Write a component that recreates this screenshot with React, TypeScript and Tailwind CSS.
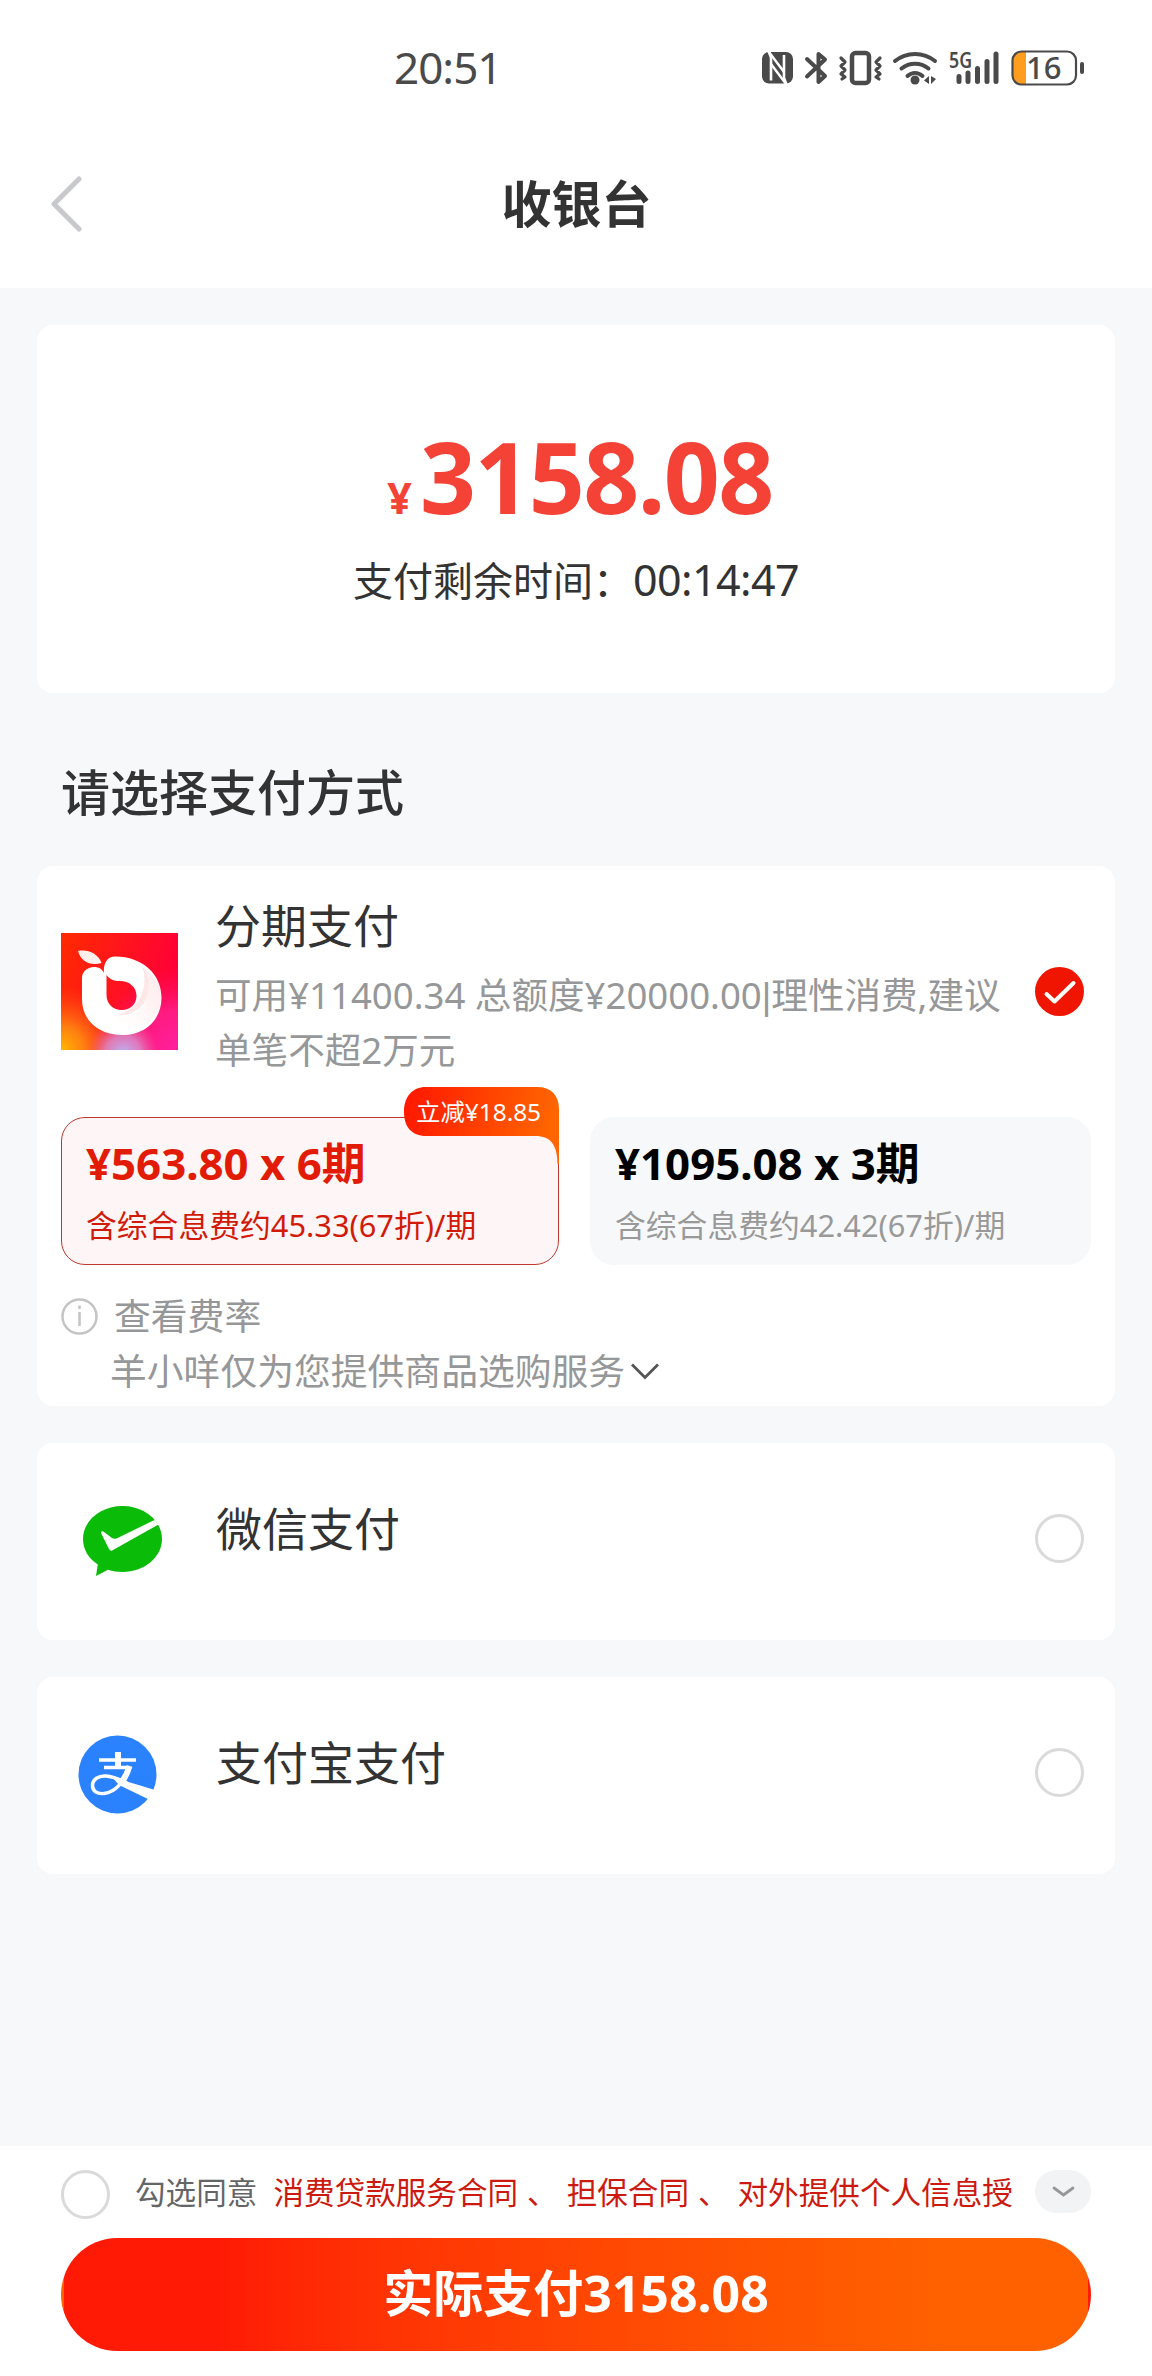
import clsx from "clsx";
import React, { useState } from "react";

type Plan = {
	id: string;
	title: string;
	fee: string;
	discount?: string;
};

const plans: Plan[] = [
	{
		id: "6",
		title: "¥563.80 x 6期",
		fee: "含综合息费约45.33(67折)/期",
		discount: "立减¥18.85",
	},
	{ id: "3", title: "¥1095.08 x 3期", fee: "含综合息费约42.42(67折)/期" },
];

function StatusBar() {
	return (
		<div className="h-[134px] pl-[394px] pr-[66px] flex items-center justify-between text-[#4a4a4a]">
			<span className="text-[44px] leading-[60px] tracking-[-1px]">20:51</span>
			<svg width="324" height="56" viewBox="0 -11 324 56" fill="none">
				{/* nfc */}
				<rect y="2" width="31" height="31.500" rx="7" fill="currentColor" />
				<path
					d="M6.500 1L9 7.500v23M24.500 34.500L22 28V5"
					stroke="#fff"
					strokeWidth="2.600"
				/>
				<path
					d="M7 2l15 20M9 14l15 20"
					stroke="#fff"
					strokeWidth="2.400"
				/>
				{/* bluetooth */}
				<path
					d="M45 9l18 17-6.500 6V4L63 9.500 45 26.500"
					stroke="currentColor"
					strokeWidth="4"
					strokeLinecap="round"
					strokeLinejoin="round"
				/>
				{/* vibrate */}
				<rect
					x="90"
					y="3"
					width="17"
					height="30"
					rx="3.500"
					stroke="currentColor"
					strokeWidth="4.500"
				/>
				<path
					d="M79 8l4 4-4 4 4 4-4 4 4 3-3 2M118 8l-4 4 4 4-4 4 4 4-4 3 3 2"
					stroke="currentColor"
					strokeWidth="3.200"
					strokeLinecap="round"
					strokeLinejoin="round"
				/>
				{/* wifi */}
				<path
					d="M133 11c11.500-9.500 28.500-9.500 40 0M139.500 18.500c8-6.500 19-6.500 27 0M145.500 26c4.500-4 10.500-4 15 0"
					stroke="currentColor"
					strokeWidth="4"
					strokeLinecap="round"
				/>
				<circle cx="153" cy="30" r="4.500" fill="currentColor" />
				<path d="M167 26v8l-5-3.500zM169 26l5 3-5 5z" fill="currentColor" />
				{/* signal */}
				<text
					x="187"
					y="17.500"
					fill="currentColor"
					fontSize="21"
					fontWeight="600"
					textLength="23"
					lengthAdjust="spacingAndGlyphs"
				>
					5G
				</text>
				<path
					d="M197 26.500v5M206 23v8.500M215.500 18.500v13M225 11.500v20M234 4v27.500"
					stroke="currentColor"
					strokeWidth="5"
					strokeLinecap="round"
				/>
				{/* battery */}
				<path d="M258 2h6v32h-6c-4 0-7-3-7-7V9c0-4 3-7 7-7z" fill="#ff9d1e" />
				<rect
					x="250.500"
					y="1.500"
					width="63.500"
					height="33"
					rx="9"
					stroke="currentColor"
					strokeWidth="2.200"
				/>
				<rect x="318" y="12" width="4" height="12" rx="2" fill="currentColor" />
				<text
					x="264"
					y="29"
					fill="currentColor"
					fontSize="31"
					fontWeight="500"
				>
					16
				</text>
			</svg>
		</div>
	);
}

function InstallmentLogo() {
	return (
		<svg width="117" height="117" viewBox="0 0 117 117" className="shrink-0">
			<defs>
				<linearGradient id="logoBase" x1="0" y1="0" x2="1" y2="0.300">
					<stop offset="0" stopColor="#ff2a00" />
					<stop offset="1" stopColor="#ff0038" />
				</linearGradient>
				<radialGradient id="logoYellow" cx="0" cy="1" r="0.550">
					<stop offset="0" stopColor="#ffb800" />
					<stop offset="0.350" stopColor="#ff9410" stopOpacity="0.850" />
					<stop offset="1" stopColor="#ff5a10" stopOpacity="0" />
				</radialGradient>
				<radialGradient id="logoPink" cx="1" cy="1" r="0.700">
					<stop offset="0" stopColor="#ff1fa0" />
					<stop offset="0.500" stopColor="#ff1f8c" stopOpacity="0.850" />
					<stop offset="1" stopColor="#ff1060" stopOpacity="0" />
				</radialGradient>
				<radialGradient id="logoBlue" cx="0.530" cy="1.030" r="0.300">
					<stop offset="0" stopColor="#b9b4f5" />
					<stop offset="0.500" stopColor="#d890d0" stopOpacity="0.800" />
					<stop offset="1" stopColor="#e860a0" stopOpacity="0" />
				</radialGradient>
				<linearGradient id="logoFold" x1="0.900" y1="0.300" x2="0.300" y2="0.700">
					<stop offset="0" stopColor="#ffc4c8" />
					<stop offset="1" stopColor="#fff6f6" />
				</linearGradient>
			</defs>
			<rect width="117" height="117" fill="url(#logoBase)" />
			<rect width="117" height="117" fill="url(#logoYellow)" />
			<rect width="117" height="117" fill="url(#logoPink)" />
			<rect width="117" height="117" fill="url(#logoBlue)" />
			<path d="M17 18c9-2 20 2 23.500 12C30 33 20 29 17 18z" fill="#fff0ee" />
			<path
				fillRule="evenodd"
				fill="#fff"
				d="M21 45c0-6 5-11 12-11 5 0 8 2 10 6-1-9 3-16.500 11-16.500 28 0 46.500 18 46.500 41C100.500 87 84 102 62 102 38 102 21 88 21 66zM45.500 42v20c0 9 7 15 15 15 9 0 15-6 15-14 0-9-7-15-17-15-6 0-10-2-13-6z"
			/>
			<path
				d="M79 33c13 14 11 35-4 47-5 4-14 6-21 2 6 9 14 13 25 13 12-5 21-16 21-30.500C100 51 92 39 79 33z"
				fill="url(#logoFold)"
				opacity="0.300"
			/>
			<path
				d="M82 35c6 22-6 44-28 47 16 2 30-7 33-22 2-9 0-18-5-25z"
				fill="#ffb9bd"
				opacity="0.350"
			/>
		</svg>
	);
}

function WechatPayIcon() {
	return (
		<svg width="79" height="70" viewBox="0 0 79 70">
			<path
				d="M39.500 0C61 0 79 14.500 79 33S61 66 39.500 66c-5 0-10-.7-14.500-2.200L13 70l1.800-11.500C5.500 52.500 0 43.500 0 33 0 14.500 18 0 39.500 0z"
				fill="#0abb07"
			/>
			<path
				d="M18 27c0-2 1.500-2 3-1l8 6c1.500 1 3 1 5 .2L71.500 14l4 4.500L30 44c-1.500 1-3 1-4-1z"
				fill="#fff"
			/>
		</svg>
	);
}

function AlipayIcon() {
	return (
		<svg width="79" height="79" viewBox="0 0 79 79" fill="none" stroke="#fff">
			<circle cx="39.500" cy="39.500" r="39" fill="#2a82ff" stroke="none" />
			<path d="M21 25h37M26 32.500h25" strokeWidth="3.500" />
			<path d="M40 17v15" strokeWidth="6" />
			<path
				d="M51 31.500C47 46 38 57 26 58.500 19 59.300 14.500 56 14.500 50.500c0-6 6-10 13.500-9.500 7 .5 14 3.500 21 7"
				strokeWidth="3.500"
			/>
			<path d="M51.500 31c-2 7-4.500 12-8.500 17" strokeWidth="6" />
			<path d="M34 42l43 13-5 10-31-15z" fill="#fff" stroke="none" />
		</svg>
	);
}

function Radio({ checked = false }: { checked?: boolean }) {
	if (checked) {
		return (
			<svg width="49" height="49" viewBox="0 0 49 49" className="shrink-0">
				<circle cx="24.500" cy="24.500" r="24.500" fill="#f01500" />
				<path
					d="M11.500 27l8 7.500L38.500 16"
					stroke="#fff"
					strokeWidth="4"
					strokeLinecap="round"
					strokeLinejoin="round"
					fill="none"
				/>
			</svg>
		);
	}
	return (
		<span className="block size-[49px] shrink-0 rounded-full border-3 border-[#dadada] bg-white" />
	);
}

function PlanCard({
	plan,
	active,
	onSelect,
}: {
	plan: Plan;
	active: boolean;
	onSelect: () => void;
}) {
	return (
		<button
			type="button"
			onClick={onSelect}
			className={clsx(
				"relative h-[148px] rounded-3xl border pl-6 flex flex-col text-left whitespace-nowrap",
				active
					? "w-[498px] border-[#c0392f] bg-[#fef5f6] text-[#d11a08]"
					: "w-[501px] border-[#f7f8fa] bg-[#f7f8fa] text-black",
			)}
		>
			<span
				className={clsx(
					"mt-[18px] text-[43.800px] leading-[54px] font-bold",
					active && "text-[#e11b05]",
				)}
			>
				{plan.title}
			</span>
			<span
				className={clsx(
					"mt-[9px] text-[30.800px] leading-[52px]",
					!active && "text-[#999999]",
				)}
			>
				{plan.fee}
			</span>
			{plan.discount && (
				<span className="absolute -right-px -top-[31px] w-[155px] h-[77px]">
					<svg
						width="155"
						height="77"
						viewBox="0 0 155 77"
						className="absolute inset-0"
					>
						<defs>
							<linearGradient id="badge" x1="0" y1="0" x2="1" y2="0.100">
								<stop offset="0.050" stopColor="#ff1a00" />
								<stop offset="1" stopColor="#ff6600" />
							</linearGradient>
						</defs>
						<path
							d="M22 0h111c14 0 22 8 22 22v55h-1.500c0-18-6-28-22.500-28H22C8 49 0 40 0 25S8 0 22 0z"
							fill="url(#badge)"
						/>
					</svg>
					<span className="relative block pl-3 text-[24.400px] leading-[49px] text-white">
						{plan.discount}
					</span>
				</span>
			)}
		</button>
	);
}

function PayMethod({
	icon,
	name,
	iconClass,
}: {
	icon: React.ReactNode;
	name: string;
	iconClass: string;
}) {
	return (
		<li className="mt-[37px] h-[197px] rounded-2xl bg-white pr-[31px] flex">
			<span className={clsx("w-[179px] shrink-0", iconClass)}>{icon}</span>
			<h4 className="mt-14 flex-1 text-[46px] leading-[58px]">{name}</h4>
			<span className="mt-[71px]">
				<Radio />
			</span>
		</li>
	);
}

export default function App() {
	const [plan, setPlan] = useState("6");

	return (
		<div className="w-[1152px] h-[2376px] overflow-hidden flex flex-col bg-[#f7f8fa] text-[#333333] font-['Noto_Sans','Noto_Sans_CJK_SC',sans-serif]">
			<header className="h-[288px] shrink-0 bg-white">
				<StatusBar />
				<div className="h-[140px] px-[50px] flex items-center">
					<svg
						width="32"
						height="56"
						viewBox="0 0 32 56"
						fill="none"
						stroke="#c8c9cc"
						strokeWidth="5"
						strokeLinecap="round"
						strokeLinejoin="round"
					>
						<path d="M29 3L4 28l25 25" />
					</svg>
					<h1 className="flex-1 pr-[31px] text-center text-[50px] leading-[60px] font-bold">
						收银台
					</h1>
				</div>
			</header>

			<main className="flex-1 px-[37px] pt-[37px]">
				<section className="h-[368px] rounded-2xl bg-white flex flex-col items-center">
					<p className="mt-24 pl-2 h-28 flex items-baseline font-bold text-[#f44336]">
						<span className="mr-2 text-[43px] leading-none">¥</span>
						<span className="text-[98px] leading-[110px] tracking-[-1.600px]">
							3158.08
						</span>
					</p>
					<p className="mt-[18px] text-[40px] leading-[60px] flex items-baseline">
						支付剩余时间：
						<span className="text-[43px] leading-none tracking-[-0.600px]">
							00:14:47
						</span>
					</p>
				</section>

				<h2 className="mt-[68px] ml-6 text-[49px] leading-[62px] font-medium">
					请选择支付方式
				</h2>

				<ul>
					<li className="mt-[43px] h-[540px] rounded-2xl bg-white px-6">
						<div className="pt-[29px] flex">
							<span className="mt-[38px]">
								<InstallmentLogo />
							</span>
							<div className="ml-[37px] w-[820px] whitespace-nowrap">
								<h4 className="text-[46px] leading-[60px]">分期支付</h4>
								<p className="mt-[13px] text-[36.600px] leading-[55px] text-[#969799]">
									可用¥11400.34 总额度¥20000.00
									<span className="font-['Liberation_Sans',sans-serif] leading-none">
										|
									</span>
									理性消费,建议
									<br />
									单笔不超2万元
								</p>
							</div>
							<span className="mt-[72px]">
								<Radio checked />
							</span>
						</div>
						<div className="mt-[39px] flex justify-between">
							{plans.map((item) => (
								<PlanCard
									key={item.id}
									plan={item}
									active={plan === item.id}
									onSelect={() => setPlan(item.id)}
								/>
							))}
						</div>
						<div className="mt-6 flex items-center text-[36.800px] leading-[54px] text-[#969799]">
							<svg
								width="37"
								height="37"
								viewBox="0 0 37 37"
								fill="none"
								stroke="#c4c4c4"
								strokeWidth="2.500"
							>
								<circle cx="18.500" cy="18.500" r="17" />
								<path d="M18.500 14v14M18.500 7.500v3.500" />
							</svg>
							<span className="ml-4">查看费率</span>
						</div>
						<div className="pl-[49px] flex items-center text-[36.800px] leading-[56px] text-[#969799]">
							羊小咩仅为您提供商品选购服务
							<svg
								width="28"
								height="17"
								viewBox="0 0 28 17"
								fill="none"
								stroke="#555555"
								strokeWidth="2.800"
								className="ml-1.5"
							>
								<path d="M1 1.500l13 13 13-13" />
							</svg>
						</div>
					</li>
					<PayMethod
						name="微信支付"
						icon={<WechatPayIcon />}
						iconClass="pt-[63px] pl-[46px]"
					/>
					<PayMethod
						name="支付宝支付"
						icon={<AlipayIcon />}
						iconClass="pt-[58px] pl-[41px]"
					/>
				</ul>
			</main>

			<footer className="h-[230px] shrink-0 bg-white px-[61px] pt-6">
				<div className="h-[50px] flex items-start whitespace-nowrap text-[30.600px] leading-[44px]">
					<Radio />
					<span className="ml-[25px] text-[#646566]">勾选同意</span>
					<span className="ml-4 w-[742px] text-[#cc1a10] [word-spacing:1px]">
						消费贷款服务合同 、 担保合同 、 对外提供个人信息授
					</span>
					<span className="ml-auto w-14 h-[43px] shrink-0 rounded-full bg-[#f2f3f5] flex items-center justify-center">
						<svg
							width="23"
							height="12"
							viewBox="0 0 23 12"
							fill="none"
							stroke="#969799"
							strokeWidth="2.800"
							strokeLinecap="round"
						>
							<path d="M2 2l9.500 7L21 2" />
						</svg>
					</span>
				</div>
				<button
					type="button"
					className="mt-[18px] w-full h-[113px] pb-1 rounded-full border-[3px] border-transparent bg-linear-to-r from-[#ff1a05] from-15% to-[#ff6000] to-85% text-[50px] leading-none font-bold text-white"
				>
					实际支付3158.08
				</button>
			</footer>
		</div>
	);
}
